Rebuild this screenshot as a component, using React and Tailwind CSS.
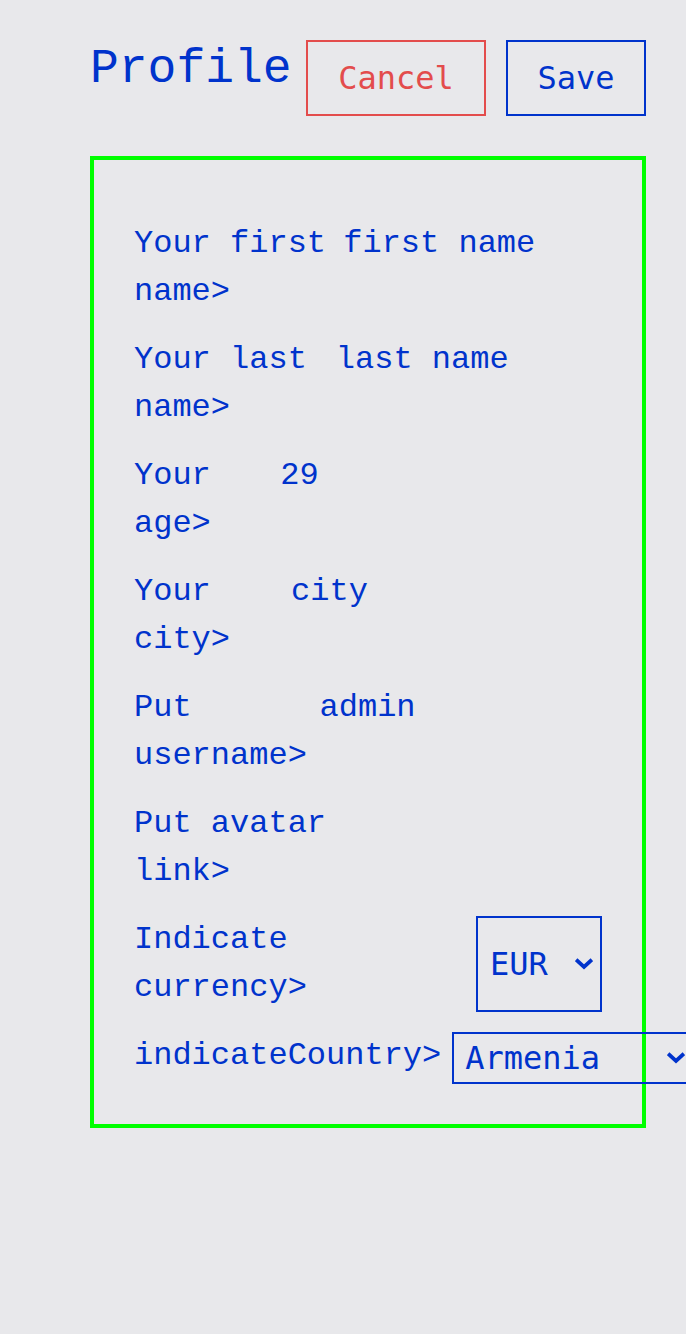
import React from 'react';

const mono = "font-['Liberation_Mono',monospace]";

const Chevron = () => (
  <svg width="18" height="12" viewBox="0 0 18 12" className="pointer-events-none absolute top-1/2 -translate-y-1/2 right-[9px]">
    <path d="M2.5 3 L9 9 L15.5 3" fill="none" stroke="#0033cc" strokeWidth="3.8" strokeLinecap="square" />
  </svg>
);

const fields = [
  { label: 'Your first name>', value: 'first name' },
  { label: 'Your last name>', value: 'last name' },
  { label: 'Your age>', value: '29' },
  { label: 'Your city>', value: 'city' },
  { label: 'Put username>', value: 'admin' },
  { label: 'Put avatar link>', value: '' },
];

const App = () => {
  return (
    <div className={`min-h-screen overflow-hidden bg-[#e8e8eb] pl-[90px] pr-[40px] pt-[40px] text-[#0033cc] ${mono}`}>
      {/* Header */}
      <div className="flex items-start">
        <h1 className="text-[48px] leading-[58px]">Profile</h1>
        <div className="ml-auto flex gap-5">
          <button className="w-[180px] border-2 border-[#e34c4c] py-3 text-center text-[32px] leading-[48px] text-[#e34c4c] font-['DejaVu_Sans_Mono',monospace]">
            Cancel
          </button>
          <button className="w-[140px] border-2 border-[#0033cc] py-3 text-center text-[32px] leading-[48px] text-[#0033cc] font-['DejaVu_Sans_Mono',monospace]">
            Save
          </button>
        </div>
      </div>

      {/* Form */}
      <div className="mt-10 border-4 border-[#00ff00] px-10 pt-[60px] pb-10">
        <div className="flex flex-col gap-5 text-[32px] leading-[48px]">
          {fields.map((f) => (
            <div key={f.label} className="flex items-start">
              <label>{f.label}</label>
              <input
                defaultValue={f.value}
                className="h-[48px] w-[380px] min-w-0 bg-transparent p-0 text-[32px] leading-[48px] text-[#0033cc] outline-none"
              />
            </div>
          ))}

          <div className="flex items-stretch">
            <label>Indicate currency&gt;</label>
            <div className="relative w-[126px] shrink-0">
              <select
                defaultValue="EUR"
                className="h-full w-full appearance-none border-2 border-[#0033cc] bg-transparent pl-3 text-[32px] text-[#0033cc] outline-none font-['DejaVu_Sans_Mono',monospace]"
              >
                <option>EUR</option>
                <option>USD</option>
              </select>
              <Chevron />
            </div>
          </div>

          <div className="flex items-start">
            <label className="shrink-0">indicateCountry&gt;</label>
            <div className="relative ml-[11px] h-[52px] w-[242px] shrink-0">
              <select
                defaultValue="Armenia"
                className="h-full w-full appearance-none border-2 border-[#0033cc] bg-transparent pl-[11px] text-[32px] leading-[48px] text-[#0033cc] outline-none font-['DejaVu_Sans_Mono',monospace]"
              >
                <option>Armenia</option>
                <option>Georgia</option>
              </select>
              <Chevron />
            </div>
          </div>
        </div>
      </div>
    </div>
  );
};

export default App;
